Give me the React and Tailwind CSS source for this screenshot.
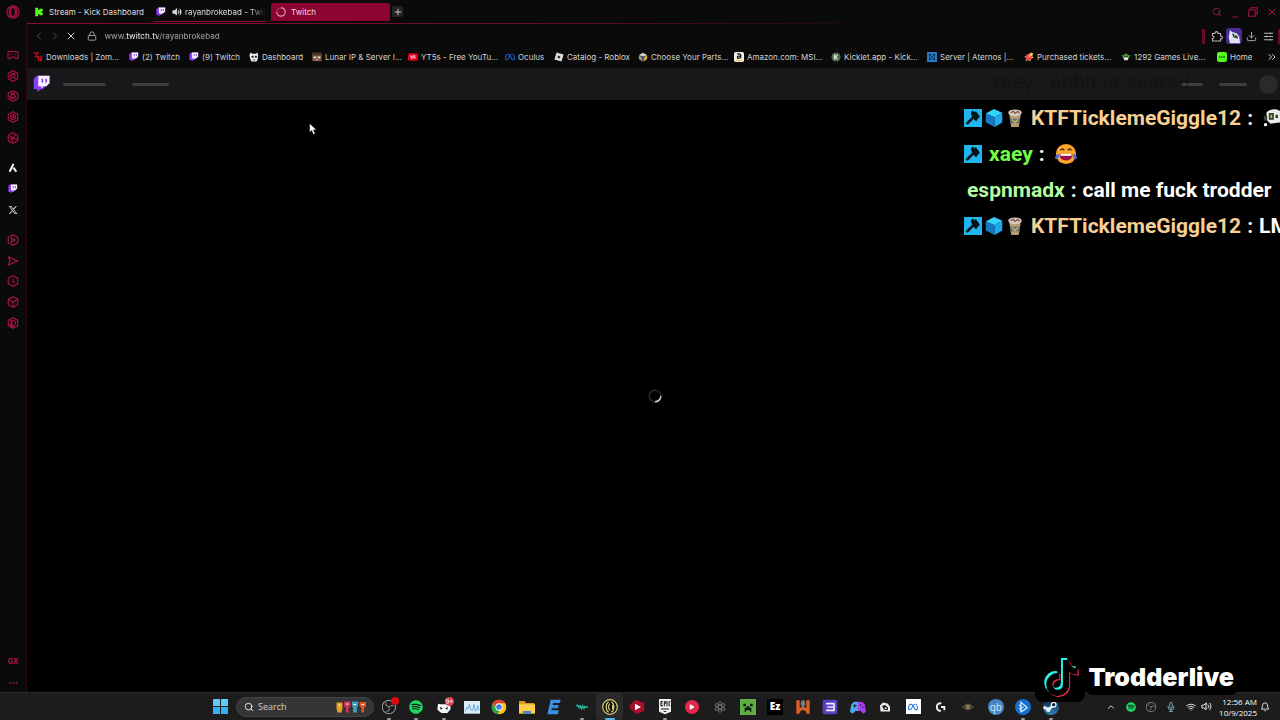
import {
  FiSearch,
  FiMinus,
  FiX,
  FiPlus,
  FiLock,
  FiChevronLeft,
  FiChevronRight,
  FiChevronsRight,
  FiChevronUp,
  FiDownload,
  FiWifi,
  FiVolume2,
  FiBell,
  FiMic,
} from "react-icons/fi";
import { FaSpotify, FaTiktok, FaMeta, FaXTwitter, FaPlay } from "react-icons/fa6";
import { SiObsstudio } from "react-icons/si";
import clsx from "clsx";

/* ---------- small drawings ---------- */

const Drawing = ({ children, className = "size-4" }) => (
  <svg viewBox="0 0 24 24" className={className} aria-hidden="true">
    {children}
  </svg>
);

const TwitchLogo = ({ className }) => (
  <svg viewBox="0 0 24 24" className={className} aria-hidden="true">
    <path d="M5 1 1 5v14h5v4l4-4h3l9-9V1z" fill="#8b3df5" />
    <path d="M7 1h15v10l-4 4h-4l-3 3v-3H7z" fill="#f6f1ff" />
    <path d="M11.5 5h2v5h-2zM16.5 5h2v5h-2z" fill="#7a35dd" />
  </svg>
);

const OperaLogo = ({ className }) => (
  <svg viewBox="0 0 24 24" className={className} fill="none" stroke="currentColor" aria-hidden="true">
    <circle cx="12" cy="12" r="10.500" strokeWidth="2" />
    <ellipse cx="12" cy="12" rx="4" ry="8" strokeWidth="2" />
    <path d="M9 3.500C4 7 4 17 9 20.500M15 3.500c5 3.500 5 13.500 0 17" strokeWidth="1.800" />
  </svg>
);

const HexIcon = ({ children }) => (
  <svg viewBox="0 0 24 24" className="size-3" fill="none" stroke="currentColor" strokeWidth="2.200" aria-hidden="true">
    <path d="M12 1.500 21.500 6.500v11l-9.500 5-9.500-5v-11z" strokeLinejoin="round" />
    {children}
  </svg>
);

const Spinner = ({ className }) => (
  <svg viewBox="0 0 24 24" className={className} fill="none" strokeWidth="2.500" aria-hidden="true">
    <circle cx="12" cy="12" r="10" stroke="currentColor" opacity="0.2" />
    <path d="M22 12a10 10 0 0 1-10 10" stroke="currentColor" />
  </svg>
);

/* three quarters of a ring, used in the tab */
const TabSpinner = () => (
  <svg viewBox="0 0 24 24" className="size-2.5" fill="none" stroke="currentColor" strokeWidth="3" aria-hidden="true">
    <circle cx="12" cy="12" r="10" opacity="0.25" />
    <path d="M12 2a10 10 0 1 1-10 10" opacity="0.6" />
  </svg>
);

/* ---------- data ---------- */

const bookmarks = [
  {
    label: "Downloads | Zom...",
    width: "w-24",
    icon: <path d="M1 2h11L6 11h6v3M12 12h9l-5 10M13 13v8M20 12v10" fill="none" stroke="#c8101c" strokeWidth="3" />,
  },
  { label: "(2) Twitch", width: "w-15", twitch: true },
  { label: "(9) Twitch", width: "w-15", twitch: true },
  {
    label: "Dashboard",
    width: "w-[63px]",
    icon: (
      <>
        <path d="M4 1l4 3h8l4-3 2 7-1 9-3 6H6l-3-6L1 8z" fill="#f3f3f3" />
        <path d="M6 9h5v5H6zM14 9h5v5h-5zM9 18h6v2H9z" fill="#222" />
      </>
    ),
  },
  {
    label: "Lunar IP & Server I...",
    width: "w-24",
    icon: (
      <>
        <path d="M1 2h22v20H1z" fill="#7b5a49" />
        <path d="M1 2h22v6H1z" fill="#4a3227" />
        <path d="M4 11h6v4H4zM14 11h6v4h-6z" fill="#e8d6c8" />
        <path d="M9 17h6v3H9z" fill="#c98f78" />
      </>
    ),
  },
  {
    label: "YT5s - Free YouTu...",
    width: "w-[97px]",
    icon: (
      <>
        <rect x="0" y="3" width="24" height="18" rx="4" fill="#e3001b" />
        <path d="M5 10h12l-3-3M19 14H7l3 3" fill="none" stroke="#fff" strokeWidth="2" />
      </>
    ),
  },
  { label: "Oculus", width: "w-[49px]", meta: true },
  {
    label: "Catalog - Roblox",
    width: "w-21",
    icon: (
      <>
        <path d="M6 1l17 5-5 17L1 18z" fill="#d9d9d9" />
        <path d="M10 9l5 1.500-1.500 5L8.500 14z" fill="#222" />
      </>
    ),
  },
  {
    label: "Choose Your Parts...",
    width: "w-24",
    icon: (
      <>
        <path d="M12 2l10 5-10 5L2 7z" fill="#d8d4c8" />
        <path d="M2 8l9 5v10l-9-6z" fill="#9b938a" />
        <path d="M22 8l-9 5v10l9-6z" fill="#e7b930" />
        <path d="M9 9l7 3-2 6-5-2z" fill="#38485f" />
      </>
    ),
  },
  {
    label: "Amazon.com: MSI...",
    width: "w-[97px]",
    icon: (
      <>
        <rect width="24" height="24" rx="4" fill="#f5f0e4" />
        <path d="M8 6c2-3 8-2 8 1v8M16 9c-5 0-8 1-8 4s5 3 8 0" fill="none" stroke="#111" strokeWidth="3" />
        <path d="M4 19c5 3 11 3 16 0" fill="none" stroke="#e79a1c" strokeWidth="2" />
      </>
    ),
  },
  {
    label: "Kicklet.app - Kick...",
    width: "w-24",
    icon: (
      <>
        <circle cx="12" cy="12" r="11" fill="#4d6b4b" />
        <path d="M7 6h4v4l4-4h3l-5 6 5 6h-3l-4-4v4H7z" fill="#d7e7d4" />
      </>
    ),
  },
  {
    label: "Server | Aternos |...",
    width: "w-[97px]",
    icon: (
      <>
        <rect width="24" height="24" rx="2" fill="#2a7cc4" />
        <path d="M5 5h5v3H8v3H5zM19 5h-5v3h2v3h3zM5 19h5v-3H8v-3H5zM19 19h-5v-3h2v-3h3zM10 10h4v4h-4z" fill="#0b2944" />
      </>
    ),
  },
  {
    label: "Purchased tickets...",
    width: "w-[97px]",
    icon: (
      <>
        <path d="M14 2l3 4 5-2-2 6 3 4-6 2-2 6-5-3-6 3 1-7-4-4 6-2 1-5 4 2z" fill="#f5b72c" />
        <path d="M4 9l8-4 8 6-5 8-9 1z" fill="#ee3f58" />
        <path d="M17 1l5 2-8 9-4 1z" fill="#ffd94a" />
      </>
    ),
  },
  {
    label: "1292 Games Live...",
    width: "w-24",
    icon: (
      <>
        <path d="M1 8l5 0c2-5 10-5 12 0l5 0-5 7H6z" fill="#4f9a3b" />
        <path d="M6 13h12l-2 7H8z" fill="#e9e9e0" />
        <path d="M8 9h3v3H8zM13 9h3v3h-3z" fill="#132710" />
      </>
    ),
  },
  {
    label: "Home",
    width: "w-10",
    icon: (
      <>
        <rect width="24" height="24" rx="5" fill="#53fc18" />
        <path d="M5 10h3v4H5zM10 10h3v4h-3zM15 10h4v4h-4z" fill="#12420a" />
      </>
    ),
  },
];

const taskbarApps = [
  {
    name: "OBS Studio",
    running: true,
    icon: <SiObsstudio className="size-3.5 text-[#c9c9c9]" />,
    badge: "size-2 bg-[#e00610]",
  },
  { name: "Spotify", running: true, icon: <FaSpotify className="size-3.5 text-[#1ed760]" /> },
  {
    name: "Chat",
    running: true,
    icon: (
      <Drawing>
        <path d="M3 7l4 1h9l5-1 1 8-5 6H8l-6-5z" fill="#f5f5f5" />
        <path d="M6 12l4 2-3 2zM18 12l-4 2 3 2z" fill="#111" />
      </Drawing>
    ),
    badge: "size-[9px] bg-[#d8455a]",
    count: "9+",
  },
  {
    name: "Performance",
    icon: (
      <Drawing>
        <path d="M0 3h24v19H0z" fill="#dcecf7" />
        <path d="M2 19l2-6 2 2 2-7 2 8 3 1 2-9 2 10 2-1 2-7 1 7" fill="none" stroke="#6aa9dd" strokeWidth="1.500" />
      </Drawing>
    ),
  },
  {
    name: "Chrome",
    icon: (
      <Drawing>
        <circle cx="12" cy="12" r="11" fill="#f9c515" />
        <path d="M2.500 6.500A11 11 0 0 1 21.500 6.500H12L8 15z" fill="#e33b2e" />
        <path d="M2.500 6.500 8.500 16 13 17l-3 6A11 11 0 0 1 2.500 6.500z" fill="#2ba24c" />
        <circle cx="12" cy="12" r="5.500" fill="#fff" />
        <circle cx="12" cy="12" r="4.200" fill="#3f7fe8" />
      </Drawing>
    ),
  },
  {
    name: "File Explorer",
    icon: (
      <Drawing>
        <path d="M0 3h8l3 3h12v6H0z" fill="#d99a1c" />
        <path d="M0 8h24v14H0z" fill="#fbcf4b" />
        <path d="M6 18h12v4H6z" fill="#3b86d1" />
      </Drawing>
    ),
  },
  {
    name: "Editor",
    icon: (
      <Drawing>
        <path d="M7 1h15l-1 5H11l-1 3h9l-1 5H9l-1 3h11l-1 6H2z" fill="#3d8fe6" />
      </Drawing>
    ),
  },
  {
    name: "Voicemod",
    running: true,
    icon: (
      <Drawing className="size-3">
        <path d="M0 9h4l2 4 2-3 3 5 2-5 3 5 2-4 2 1h4" fill="none" stroke="#23b7a0" strokeWidth="3" />
      </Drawing>
    ),
  },
  {
    name: "Opera GX",
    active: true,
    icon: (
      <Drawing>
        <circle cx="12" cy="12" r="11" fill="#14140f" stroke="#d9cf7c" strokeWidth="1.800" />
        <path
          d="M10 4C5 7 5 17 10 20M14 4c5 3 5 13 0 16M12 7c-3 3-3 7 0 10M16 9v6"
          fill="none"
          stroke="#d9cf7c"
          strokeWidth="1.800"
        />
      </Drawing>
    ),
  },
  {
    name: "YouTube",
    icon: (
      <Drawing>
        <path d="M10 1l13 5v12l-12 5L1 14V9z" fill="#a80e27" />
        <path d="M9 7l9 5-9 5z" fill="#fff" />
      </Drawing>
    ),
  },
  {
    name: "Epic Games",
    running: true,
    icon: (
      <Drawing>
        <path d="M3 0h18v19l-9 4-9-4z" fill="#efefef" />
        <path
          d="M6 3v8M6 4h3M6 7h2M6 10h3M11 11V4h2v3h-2M15 3v8M20 4h-2v6h2M6 15h12"
          fill="none"
          stroke="#1b1b1b"
          strokeWidth="1.500"
        />
        <path d="M9 18h6l-3 2z" fill="#1b1b1b" />
      </Drawing>
    ),
  },
  {
    name: "Media player",
    icon: (
      <span className="flex size-3.5 items-center justify-center rounded-full bg-[#e5264c]">
        <FaPlay className="size-1.5 text-white" />
      </span>
    ),
  },
  {
    name: "Atom",
    icon: (
      <Drawing className="size-3">
        <g fill="none" stroke="#757575" strokeWidth="1.800">
          <ellipse cx="12" cy="12" rx="4" ry="11" />
          <ellipse cx="12" cy="12" rx="4" ry="11" transform="rotate(60 12 12)" />
          <ellipse cx="12" cy="12" rx="4" ry="11" transform="rotate(120 12 12)" />
        </g>
      </Drawing>
    ),
  },
  {
    name: "Minecraft",
    icon: (
      <Drawing>
        <path d="M0 0h24v24H0z" fill="#5fae45" />
        <path d="M5 7h4v4H5zM15 7h4v4h-4zM10 11h4v2h3v6h-2v-2H9v2H7v-6h3z" fill="#0c1a09" />
      </Drawing>
    ),
  },
  {
    name: "Ezfrags",
    icon: (
      <span className="flex size-4 items-center justify-center bg-black text-[10px] font-extrabold text-white">Ez</span>
    ),
  },
  {
    name: "Game",
    icon: (
      <Drawing>
        <path d="M1 1h22v22H1z" fill="#2a1a14" />
        <path d="M2 2h5v20H2zM17 2h5v20h-5zM7 14l5-4 5 4v5l-5-3-5 3z" fill="#d8602b" />
        <path d="M10 2h4l2 6-4 5-4-5z" fill="#6f7b86" />
      </Drawing>
    ),
  },
  {
    name: "Notes",
    icon: (
      <Drawing>
        <rect x="1" y="1" width="22" height="22" rx="3" fill="#5b3fc0" />
        <path d="M6 7h12v10H6M8 12h10" fill="none" stroke="#efeaff" strokeWidth="2.500" />
      </Drawing>
    ),
  },
  {
    name: "Controller",
    icon: (
      <Drawing>
        <path d="M6 4h6v14H8l-4 4-4-3 2-11z" fill="#4aa8f0" />
        <path d="M12 4h6l4 4 2 11-4 3-4-4h-4z" fill="#a53df0" />
        <path d="M7 8v5M5 10h5M15 9h2M18 12h2" stroke="#1b1b1b" strokeWidth="1.500" />
      </Drawing>
    ),
  },
  {
    name: "Wallet",
    icon: (
      <Drawing className="size-3">
        <path d="M2 9l6-6 9 2 5 6v10H3z" fill="#ececec" />
        <path d="M6 10l6-2 6 5v5H10z" fill="#1c1c1c" />
        <path d="M12 12l5 4h-6z" fill="#ececec" />
      </Drawing>
    ),
  },
  {
    name: "Meta",
    icon: (
      <span className="flex size-[15px] items-center justify-center bg-white">
        <FaMeta className="size-2.5 text-[#1f6be0]" />
      </span>
    ),
  },
  {
    name: "Logitech G Hub",
    icon: (
      <Drawing className="size-2.5">
        <path d="M13 3C5 2 2 7 2 12s3 10 10 9M12 12h8v8" fill="none" stroke="#f2f2f2" strokeWidth="4.500" />
      </Drawing>
    ),
  },
  {
    name: "Mod manager",
    icon: (
      <Drawing>
        <path d="M2 12l10-6 10 6-10 6z" fill="#4a4232" />
        <path d="M9 9l6 6M15 9l-6 6" stroke="#9c8a58" strokeWidth="2" />
      </Drawing>
    ),
  },
  {
    name: "qBittorrent",
    icon: (
      <span className="flex size-4 items-center justify-center rounded-full bg-[#4a82c6] text-[10px] leading-none text-[#d8e8fb]">
        qb
      </span>
    ),
  },
  {
    name: "Battle.net",
    running: true,
    icon: (
      <Drawing>
        <circle cx="12" cy="12" r="12" fill="#1470cf" />
        <path d="M9 5v14l4-2 5-4-3-3zM6 9l3 2M6 15l7-3" fill="none" stroke="#cfe9ff" strokeWidth="2" />
      </Drawing>
    ),
  },
  {
    name: "Steam",
    running: true,
    icon: (
      <span className="rounded-full bg-linear-to-b from-[#10203c] to-[#2a86bd]">
        <Drawing>
          <path d="M1 12l7 4 6-5" fill="none" stroke="#e8f1f8" strokeWidth="4" />
          <circle cx="8" cy="16" r="3.500" fill="#e8f1f8" />
          <circle cx="16" cy="8.500" r="3.500" fill="#10203c" stroke="#e8f1f8" strokeWidth="2" />
        </Drawing>
      </span>
    ),
  },
];

/* ---------- browser chrome ---------- */

const TabStrip = () => (
  <header className="flex h-[23px] shrink-0 items-center text-[8px] text-[#dedede]">
    <button aria-label="Opera menu" className="flex w-[26px] justify-center text-[#b01345]">
      <OperaLogo className="size-3.5" />
    </button>
    <div role="tablist" className="flex h-full items-center">
      <button role="tab" className="flex h-full w-[127px] items-center gap-[5px] pl-2 whitespace-nowrap">
        <Drawing className="size-2.5">
          <path d="M3 2h7v5h3V4h8v6h-3v4h3v6h-8v-3h-3v5H3z" fill="#53fc18" />
        </Drawing>
        Stream - Kick Dashboard
      </button>
      <button
        role="tab"
        className="flex h-5 w-[113px] items-center border-b border-[#8d0c37] pt-px pl-[3px] whitespace-nowrap"
      >
        <TwitchLogo className="size-2.5 shrink-0" />
        <FiVolume2 className="mr-[3px] ml-1.5 size-2.5 shrink-0 fill-current" />
        <span className="mask-r-from-80%">rayanbrokebad - Twit</span>
      </button>
      <button
        role="tab"
        aria-selected="true"
        className="ml-[5px] flex h-[18px] w-[119px] items-center gap-[5px] rounded-t-xs bg-[#8a0332] pl-[5px] text-[#f0dce3]"
      >
        <TabSpinner />
        Twitch
      </button>
    </div>
    <button aria-label="New tab" className="ml-0.5 flex size-[11px] items-center justify-center rounded-xs bg-[#242424]">
      <FiPlus className="size-2.5" />
    </button>
    <div className="mr-0.5 ml-auto flex items-center gap-2 text-[#b01345]">
      <button aria-label="Search tabs">
        <FiSearch className="size-2.5" />
      </button>
      <button aria-label="Minimize" className="flex h-5 items-end">
        <FiMinus className="size-2.5" />
      </button>
      <button aria-label="Restore">
        <Drawing className="size-2.5">
          <path d="M2 7h15v15H2zM7 7V2h15v15h-5" fill="none" stroke="currentColor" strokeWidth="2.500" />
        </Drawing>
      </button>
      <button aria-label="Close">
        <FiX className="size-3" />
      </button>
    </div>
  </header>
);

const SideBar = () => (
  <aside className="flex w-[26px] shrink-0 flex-col items-center gap-2.5 bg-[#0b0a0b] pt-[22px] text-[#b01345]">
    <div className="flex h-[103px] flex-col items-center justify-around">
      <button aria-label="Player">
        <Drawing className="size-3">
          <path
            d="M3 5h18l1 2v11l-1 1h-4l-3-3h-4l-3 3H3l-1-1V7zM6 11h3M15 11h3"
            fill="none"
            stroke="currentColor"
            strokeWidth="2.200"
          />
        </Drawing>
      </button>
      <button aria-label="GX Cleaner">
        <HexIcon>
          <path d="M5 14c3-6 9-7 13-3M7 18c1-4 6-6 10-2M8 8l8-2M12 12l5 6" />
        </HexIcon>
      </button>
      <button aria-label="ChatGPT">
        <HexIcon>
          <path d="M8 6l8 4v7M16 5l-8 5v8M5 12l7 5 6-4" />
        </HexIcon>
      </button>
      <button aria-label="GX Control">
        <HexIcon>
          <circle cx="12" cy="12" r="5" />
          <circle cx="12" cy="12" r="1.500" />
        </HexIcon>
      </button>
      <button aria-label="Mods">
        <HexIcon>
          <path d="M5 8l7 4 6-8M12 12l-2 9M12 12l8 3M6 15l4-3" />
        </HexIcon>
      </button>
    </div>
    <div className="flex h-[62px] flex-col items-center justify-around">
      <button aria-label="Kick clips">
        <Drawing className="size-2.5">
          <path d="M13 2 4 21M13 11l7 10" fill="none" stroke="#f2f2f2" strokeWidth="5" />
        </Drawing>
      </button>
      <button aria-label="Twitch">
        <TwitchLogo className="size-2.5" />
      </button>
      <button aria-label="X">
        <FaXTwitter className="size-2.5 text-[#c9c9c9]" />
      </button>
    </div>
    <div className="flex h-[103px] flex-col items-center justify-around">
      <button aria-label="Videos">
        <HexIcon>
          <path d="M9 8l7 4-7 4z" />
        </HexIcon>
      </button>
      <button aria-label="My flow">
        <Drawing className="size-3">
          <path d="M3 4l18 8-18 8 3-8z" fill="none" stroke="currentColor" strokeWidth="2.200" />
        </Drawing>
      </button>
      <button aria-label="History">
        <HexIcon>
          <path d="M12 7v6l4 2" />
        </HexIcon>
      </button>
      <button aria-label="Extensions">
        <HexIcon>
          <path d="M3 7l9 5 9-5M12 12v10" />
        </HexIcon>
      </button>
      <button aria-label="Settings">
        <HexIcon>
          <path d="M6 9c4-4 10-2 11 2s-3 7-7 5-2-6 2-5M6 13c0 4 4 7 8 6" />
        </HexIcon>
      </button>
    </div>
    <div className="mt-auto flex flex-col items-center pb-1.5 text-[7px] leading-3 font-extrabold">
      <button>GX</button>
      <button aria-label="More" className="mt-1.5 text-[10px]">
        ...
      </button>
    </div>
  </aside>
);

const AddressBar = () => (
  <div className="flex h-6 shrink-0 items-center text-[#b5b5b5]">
    <div className="flex flex-1 items-center pl-1.5">
      <button aria-label="Back" className="w-[17px] text-[#4d4d4d]">
        <FiChevronLeft className="size-3" />
      </button>
      <button aria-label="Forward" className="w-[17px] text-[#4d4d4d]">
        <FiChevronRight className="size-3" />
      </button>
      <button aria-label="Stop loading" className="w-6 text-[#d0d0d0]">
        <FiX className="size-3" />
      </button>
      <FiLock className="size-2.5 shrink-0" />
      <input
        aria-label="Address"
        defaultValue="www.twitch.tv/rayanbrokebad"
        className="ml-[7px] w-full bg-[linear-gradient(90deg,#989898_21px,#e6e6e6_21px,#e6e6e6_54px,#989898_54px)] bg-clip-text text-[8px] font-medium text-transparent outline-none"
      />
    </div>
    <div className="flex items-center">
      <span className="mr-1.5 h-[15px] w-[3px] bg-[#6b0a2c]" />
      <button aria-label="Extensions">
        <Drawing className="size-3">
          <path
            d="M3 7h5c-1-5 7-5 6 0h5v5c5-1 5 7 0 6v4H3v-5c4 0 4-5 0-5z"
            fill="none"
            stroke="currentColor"
            strokeWidth="2.200"
          />
        </Drawing>
      </button>
      <button aria-label="Profile" className="ml-[3px]">
        <Drawing>
          <rect width="24" height="24" rx="5" fill="#4b2a96" />
          <path d="M6 3l3 3 7 2 4 5 1 10H6L4 14z" fill="#dfe6f2" />
          <path d="M9 8l8 4 1 4-7-2z" fill="#26333c" />
          <path d="M12 10l2 1v2l-2-1z" fill="#8fd46a" />
        </Drawing>
      </button>
      <button aria-label="Downloads" className="ml-1">
        <FiDownload className="size-[11px]" />
      </button>
      <button aria-label="Easy setup" className="mr-1 ml-1.5">
        <Drawing className="size-[11px]">
          <path d="M2 5h20M2 12h20M2 19h20M16 3v4M7 10v4M16 17v4" stroke="currentColor" strokeWidth="2.200" />
        </Drawing>
      </button>
      <span className="h-[15px] w-0.5 bg-[#6b0a2c]" />
    </div>
  </div>
);

const BookmarksBar = () => (
  <nav aria-label="Bookmarks" className="flex h-5 shrink-0 items-center pb-0.5 pl-1.5 text-[8px] text-[#d2d2d2]">
    {bookmarks.map(({ label, width, icon, twitch, meta }) => (
      <a key={label} href="#" className={clsx("flex shrink-0 items-center gap-[3px] whitespace-nowrap", width)}>
        {twitch && <TwitchLogo className="size-2.5 shrink-0" />}
        {meta && <FaMeta className="size-2.5 shrink-0 text-[#1464c8]" />}
        {icon && <Drawing className="size-2.5 shrink-0">{icon}</Drawing>}
        {label}
      </a>
    ))}
    <button aria-label="More bookmarks" className="mr-0.5 ml-auto">
      <FiChevronsRight className="size-3" />
    </button>
  </nav>
);

/* ---------- page ---------- */

const TwitchPage = () => (
  <main className="flex flex-1 flex-col bg-black">
    <div className="flex h-8 shrink-0 items-center bg-[#18181a] pl-1.5">
      <TwitchLogo className="size-[18px]" />
      <span className="ml-3 h-[3px] w-[43px] rounded-full bg-[#3d3d40]" />
      <span className="ml-[26px] h-[3px] w-[37px] rounded-full bg-[#3d3d40]" />
      <span className="ml-auto h-[3px] w-[22px] rounded-full bg-[#3d3d40]" />
      <span className="ml-4 h-[3px] w-7 rounded-full bg-[#3d3d40]" />
      <span className="mr-0.5 ml-3 size-[19px] rounded-full bg-[#2a2a2c]" />
    </div>
    <div className="flex flex-1 items-center justify-center pl-[3px]">
      <Spinner className="size-3.5 text-[#cfcfcf]" />
    </div>
  </main>
);

/* ---------- stream overlays ---------- */

const ModBadge = () => (
  <Drawing className="size-[18px]">
    <path d="M0 0h24v24H0z" fill="#1fb5ee" />
    <path d="M11 2l3 2 2-1 5 7-1 2-2 1-1 3-3-1-1-2-8 8-3-2 9-9-2-4z" fill="#06151c" />
  </Drawing>
);

const CubeBadge = () => (
  <Drawing className="size-[18px]">
    <path d="M12 0l11 5-10 6L1 6z" fill="#35d3fb" />
    <path d="M1 6l12 5v13L1 18z" fill="#1677c4" />
    <path d="M23 5v13l-10 6V11z" fill="#22a8ee" />
  </Drawing>
);

const CupBadge = () => (
  <Drawing className="size-[18px]">
    <path d="M4 5h16l-3 19H7z" fill="#b89a70" />
    <path d="M5 13h14l-1 6H6z" fill="#59707a" />
    <path d="M8 14l4 4 4-4" fill="none" stroke="#d8b34c" strokeWidth="2" />
    <ellipse cx="12" cy="5" rx="9" ry="4.500" fill="#d9c8bd" />
    <path d="M6 5l4-2 2 3 4-3 2 3" fill="none" stroke="#7a4a44" strokeWidth="1.500" />
  </Drawing>
);

const PandaEmote = () => (
  <Drawing className="size-5 shrink-0">
    <path d="M4 6c3-6 17-6 19 1v10l-8 1-6 1-4-4z" fill="#e9ece6" />
    <path d="M1 9h4v6H1zM7 6h6v8H7zM15 8h3v4h-3z" fill="#32402c" />
    <path d="M9 8h2v4H9z" fill="#9ccf6a" />
    <circle cx="3" cy="20" r="2" fill="#fff" />
  </Drawing>
);

const JoyEmote = () => (
  <Drawing className="size-[22px]">
    <circle cx="12" cy="12" r="11" fill="#f9a72b" />
    <path d="M5 12h14c0 4-2 7-7 7s-7-3-7-7z" fill="#9a1048" />
    <path d="M6 12h12v2H6z" fill="#fff" />
    <path d="M6 8c1-2 3-2 4 0M14 8c1-2 3-2 4 0" fill="none" stroke="#5b2b12" strokeWidth="1.800" />
    <path d="M0 17c0-3 2-5 4-5 1 4-1 7-4 5zM24 17c0-3-2-5-4-5-1 4 1 7 4 5z" fill="#4a6be0" />
  </Drawing>
);

const messages = [
  { user: "KTFTicklemeGiggle12", color: "text-[#f7cf95]", badges: 3, emote: <PandaEmote /> },
  { user: "xaey", color: "text-[#75fd46]", badges: 1, emote: <JoyEmote /> },
  { user: "espnmadx", color: "text-[#b4fca0]", badges: 0, text: "call me fuck trodder" },
  { user: "KTFTicklemeGiggle12", color: "text-[#f7cf95]", badges: 3, text: "LM" },
];

const ChatOverlay = () => (
  <section
    aria-label="Chat"
    className="absolute top-16 right-0 w-[316px] overflow-hidden font-[Roboto,sans-serif] text-[21px] leading-9 font-bold text-white"
  >
    {/* oldest message, fading out */}
    <p className="pl-[26px] whitespace-nowrap text-black/20">xaey : ahhh ur scared</p>
    {messages.map(({ user, color, badges, text, emote }, i) => (
      <p key={i} className="flex items-center whitespace-nowrap">
        {badges > 0 && (
          <span className="mr-[7px] flex items-center gap-[3px]">
            <ModBadge />
            {badges > 1 && <CubeBadge />}
            {badges > 2 && <CupBadge />}
          </span>
        )}
        <span className={clsx(color, badges === 0 && "ml-[3px]")}>{user}</span>
        <span className="mx-1.5">:</span>
        {text}
        {emote && <span className="ml-1">{emote}</span>}
      </p>
    ))}
  </section>
);

const StreamerTag = () => (
  <div className="absolute right-[42px] bottom-[18px] flex items-start">
    <div className="flex h-13 w-[50px] items-center justify-center rounded-b-lg bg-black">
      <span className="relative size-9">
        <FaTiktok className="absolute top-0 left-0 size-9 text-[#25f4ee]" />
        <FaTiktok className="absolute top-[3px] left-[3px] size-9 text-[#fe2c55]" />
        <FaTiktok className="absolute top-0.5 left-0.5 size-9 text-black" />
      </span>
    </div>
    <p className="flex h-[45px] items-center rounded-b-lg bg-black pt-2 pr-1 pl-1 font-[Inter,sans-serif] text-[25px] leading-8 font-black text-white">
      Trodderlive
    </p>
  </div>
);

/* ---------- taskbar ---------- */

const Taskbar = () => (
  <footer className="flex h-7 shrink-0 items-center border-t border-[#2b2b2b] bg-[#1c1c1c] pl-[213px] font-['Open_Sans',sans-serif] text-white">
    <button aria-label="Start" className="grid size-[15px] shrink-0 grid-cols-2 gap-px">
      <span className="bg-[#5ccbf8]" />
      <span className="bg-[#5ccbf8]" />
      <span className="bg-[#37b0f0]" />
      <span className="bg-[#37b0f0]" />
    </button>
    <label className="ml-2 flex h-5 w-[138px] shrink-0 items-center rounded-full border border-[#444] bg-[#353535] px-[7px]">
      <FiSearch className="size-2.5 shrink-0" />
      <input
        type="search"
        aria-label="Search"
        placeholder="Search"
        className="ml-1 w-full min-w-0 text-[9px] outline-none placeholder:text-[#d0d0d0]"
      />
      <svg viewBox="0 0 60 24" className="h-3 w-[30px] shrink-0" aria-hidden="true">
        <path d="M1 3h12v12l-2 8H3l-2-8z" fill="#e0a126" />
        <path d="M16 1h13v9l-4 4v9h-5v-9l-4-4z" fill="#d9305b" />
        <path d="M32 1h12v9l-2 3v10h-8V13l-2-3z" fill="#3f9db5" />
        <path d="M47 2h13v8l-4 4v9h-5v-9l-4-4z" fill="#e2562b" />
        <path d="M5 8h4M20 6h5M35 7h5M51 7h5" stroke="#fff" strokeWidth="2" />
      </svg>
    </label>
    <div className="ml-px flex h-full w-[690px] shrink-0">
      {taskbarApps.map(({ name, icon, running, active, badge, count }) => (
        <button
          key={name}
          aria-label={name}
          className={clsx("relative flex flex-1 items-center justify-center rounded-sm", active && "bg-[#2a2a2a]")}
        >
          {icon}
          {badge && (
            <span
              className={clsx(
                "absolute top-1 right-1 flex items-center justify-center rounded-full text-[7px] leading-none",
                badge
              )}
            >
              {count}
            </span>
          )}
          {running && <span className="absolute bottom-0 h-0.5 w-1 rounded-full bg-[#9a9a9a]" />}
          {active && <span className="absolute bottom-0 h-0.5 w-2.5 rounded-full bg-[#4cb8ec]" />}
        </button>
      ))}
    </div>
    <div className="mr-2.5 ml-auto flex items-center">
      <button aria-label="Hidden icons">
        <FiChevronUp className="size-2.5" />
      </button>
      <FaSpotify className="ml-2.5 size-2.5 text-[#1ed760]" />
      <SiObsstudio className="ml-2.5 size-2.5 text-[#b9b9b9]" />
      <FiMic className="ml-2.5 size-2.5 text-[#79c3cd]" />
      <FiWifi className="ml-2.5 size-2.5" />
      <FiVolume2 className="ml-[5px] size-[11px]" />
      <div className="mr-[3px] ml-[7px] flex flex-col text-right text-[8px] leading-[11px]">
        <span>12:56 AM</span>
        <span>10/9/2025</span>
      </div>
      <button aria-label="Notifications">
        <FiBell className="size-2.5" />
      </button>
    </div>
  </footer>
);

const App = () => {
  return (
    <div className="relative flex h-screen flex-col overflow-hidden bg-[#0a0a0a] font-[Inter,sans-serif]">
      <TabStrip />
      <div className="flex min-h-0 flex-1">
        <SideBar />
        <div className="flex min-w-0 flex-1 flex-col border-l border-[#2b0a16]">
          <div className="h-px shrink-0 bg-linear-to-r from-[#8d0c37] via-[#6b0a2c] via-40% to-transparent to-70%" />
          <AddressBar />
          <BookmarksBar />
          <TwitchPage />
        </div>
      </div>
      <Taskbar />

      <ChatOverlay />
      <StreamerTag />

      {/* mouse pointer */}
      <svg viewBox="0 0 12 18" className="absolute top-[123px] left-[309px] h-3 w-2" aria-hidden="true">
        <path d="M1 1v13l3-3 2.500 6 2.500-1-2.500-6H11z" fill="#fff" stroke="#222" strokeWidth="0.500" />
      </svg>
    </div>
  );
};

export default App;
